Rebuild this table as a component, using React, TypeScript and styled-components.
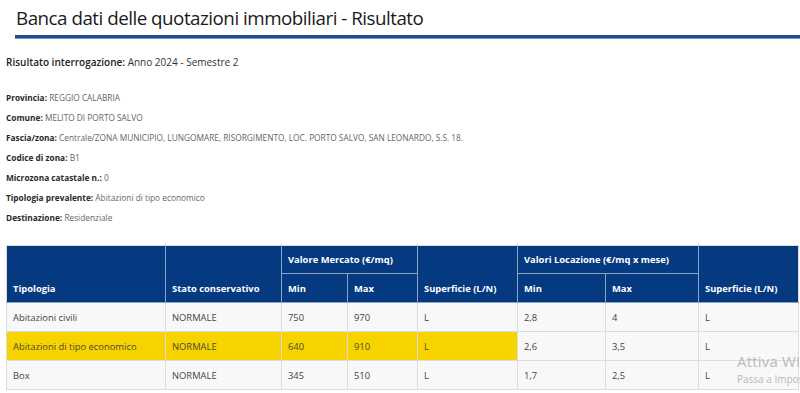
import React from 'react';
import styled, { createGlobalStyle } from 'styled-components';

type Row = {
  tipologia: string;
  stato: string;
  venditaMin: string;
  venditaMax: string;
  supVendita: string;
  locMin: string;
  locMax: string;
  supLoc: string;
  highlight?: boolean;
};

const rows: Row[] = [
  { tipologia: 'Abitazioni civili', stato: 'NORMALE', venditaMin: '750', venditaMax: '970', supVendita: 'L', locMin: '2,8', locMax: '4', supLoc: 'L' },
  { tipologia: 'Abitazioni di tipo economico', stato: 'NORMALE', venditaMin: '640', venditaMax: '910', supVendita: 'L', locMin: '2,6', locMax: '3,5', supLoc: 'L', highlight: true },
  { tipologia: 'Box', stato: 'NORMALE', venditaMin: '345', venditaMax: '510', supVendita: 'L', locMin: '1,7', locMax: '2,5', supLoc: 'L' },
];

const info: [string, string][] = [
  ['Provincia', 'REGGIO CALABRIA'],
  ['Comune', 'MELITO DI PORTO SALVO'],
  ['Fascia/zona', 'Centrale/ZONA MUNICIPIO, LUNGOMARE, RISORGIMENTO, LOC. PORTO SALVO, SAN LEONARDO, S.S. 18.'],
  ['Codice di zona', 'B1'],
  ['Microzona catastale n.', '0'],
  ['Tipologia prevalente', 'Abitazioni di tipo economico'],
  ['Destinazione', 'Residenziale'],
];

const App = () => {
  return (
    <>
      <GlobalStyle />
      <Page>
        <Title>Banca dati delle quotazioni immobiliari - Risultato</Title>

        <Query>
          <strong>Risultato interrogazione:</strong> Anno 2024 - Semestre 2
        </Query>

        <InfoList>
          {info.map(([label, value]) => (
            <InfoItem key={label}>
              <Label>{label}:</Label> {value}
            </InfoItem>
          ))}
        </InfoList>

        <Table>
          <colgroup>
            <col style={{ width: 159 }} />
            <col style={{ width: 116 }} />
            <col style={{ width: 66 }} />
            <col style={{ width: 70 }} />
            <col style={{ width: 100 }} />
            <col style={{ width: 88 }} />
            <col style={{ width: 93 }} />
            <col style={{ width: 100 }} />
          </colgroup>
          <thead>
            <tr>
              <Th rowSpan={2}>Tipologia</Th>
              <Th rowSpan={2}>Stato conservativo</Th>
              <GroupTh colSpan={2}>Valore Mercato (€/mq)</GroupTh>
              <Th rowSpan={2}>Superficie (L/N)</Th>
              <GroupTh colSpan={2}>Valori Locazione (€/mq x mese)</GroupTh>
              <Th rowSpan={2}>Superficie (L/N)</Th>
            </tr>
            <tr>
              <Th>Min</Th>
              <Th>Max</Th>
              <Th>Min</Th>
              <Th>Max</Th>
            </tr>
          </thead>
          <tbody>
            {rows.map((r) => (
              <tr key={r.tipologia}>
                <Td $hl={r.highlight}>{r.tipologia}</Td>
                <Td $hl={r.highlight}>{r.stato}</Td>
                <Td $hl={r.highlight}>{r.venditaMin}</Td>
                <Td $hl={r.highlight}>{r.venditaMax}</Td>
                <Td $hl={r.highlight}>{r.supVendita}</Td>
                <Td>{r.locMin}</Td>
                <Td>{r.locMax}</Td>
                <Td>{r.supLoc}</Td>
              </tr>
            ))}
          </tbody>
        </Table>
      </Page>

      <Watermark>
        <WatermarkTitle>Attiva Windows</WatermarkTitle>
        <WatermarkSub>Passa a Impostazioni per attivare Windows.</WatermarkSub>
      </Watermark>
    </>
  );
};

const GlobalStyle = createGlobalStyle`
  html, body {
    margin: 0;
    background: #ffffff;
    overflow: hidden;
  }
  body {
    font-family: "Open Sans", "Liberation Sans", sans-serif;
    color: #1c1c1c;
  }
`;

const Page = styled.div`
  width: 800px;
  height: 393px;
  padding: 0 2px 0 6px;
  box-sizing: border-box;
`;

const Title = styled.h1`
  margin: 0 -2px 0 9px;
  padding: 6px 0 5px 1px;
  font-size: 18.8px;
  font-weight: 400;
  letter-spacing: -0.5px;
  line-height: 24px;
  color: #1a1a1a;
  border-bottom: 3px solid #1d4f8f;
  box-shadow: 0 1px 0 #6f93c2;
`;

const Query = styled.p`
  margin: 17px 0 0;
  font-size: 10px;
  font-weight: 400;
  color: #333;
  line-height: 14px;

  strong {
    font-weight: 600;
    color: #222;
  }
`;

const InfoList = styled.div`
  display: flex;
  flex-direction: column;
  gap: 7px;
  margin-top: 22px;
`;

const InfoItem = styled.div`
  font-size: 8.3px;
  line-height: 13px;
  color: #666;
`;

const Label = styled.span`
  font-weight: 700;
  color: #2a2a2a;
`;

const Table = styled.table`
  margin-top: 21px;
  width: 792px;
  border-collapse: collapse;
  table-layout: fixed;
  font-size: 9.4px;
  border: 1px solid #dcdcdc;
`;

const Th = styled.th`
  background: #053a80;
  color: #ffffff;
  font-weight: 700;
  text-align: left;
  vertical-align: bottom;
  padding: 0 6px 7px;
  height: 21px;
  border: 1px solid #8aa2c4;
  border-top: none;
  &:first-child {
    border-left: none;
  }
  &:last-child {
    border-right: none;
  }
`;

const GroupTh = styled(Th)`
  vertical-align: middle;
  padding: 0 6px;
  height: 27px;
`;

const Td = styled.td<{ $hl?: boolean }>`
  background: ${(p) => (p.$hl ? '#f7d300' : '#f8f8f8')};
  color: ${(p) => (p.$hl ? '#4a4a3a' : '#444')};
  padding: 0 6px;
  height: 28px;
  border: 1px solid #dcdcdc;
`;

const Watermark = styled.div`
  position: absolute;
  left: 737px;
  top: 352px;
  white-space: nowrap;
  color: #b9b9b9;
  pointer-events: none;
`;

const WatermarkTitle = styled.div`
  font-size: 15px;
  line-height: 18px;
  letter-spacing: 0.2px;
`;

const WatermarkSub = styled.div`
  font-size: 10px;
  line-height: 14px;
  margin-top: 2px;
`;

export default App;
